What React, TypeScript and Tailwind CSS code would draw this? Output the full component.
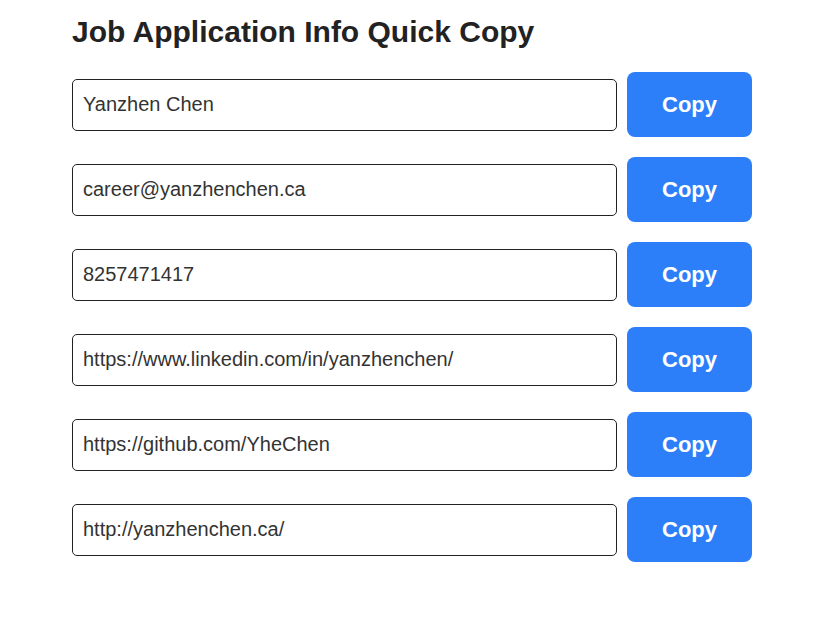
const FIELDS = [
  'Yanzhen Chen',
  'career@yanzhenchen.ca',
  '8257471417',
  'https://www.linkedin.com/in/yanzhenchen/',
  'https://github.com/YheChen',
  'http://yanzhenchen.ca/',
];

export default function App() {
  return (
    <div className="min-h-screen bg-white pl-[72px] pt-[15px] font-['Liberation_Sans',Arial,sans-serif]">
      <h1 className="text-[30px] leading-[34px] font-bold text-[#222] mb-[23px]">
        Job Application Info Quick Copy
      </h1>
      <div className="flex flex-col gap-[20px]">
        {FIELDS.map(value => (
          <div key={value} className="flex items-center gap-[10px]">
            <input
              readOnly
              value={value}
              className="w-[545px] h-[52px] px-[10px] border border-[#222] rounded-[5px] text-[20px] text-[#333] outline-none bg-white"
            />
            <button
              type="button"
              onClick={() => navigator.clipboard?.writeText(value)}
              className="w-[125px] h-[65px] rounded-[8px] bg-[#2d7ff9] text-white text-[22px] font-bold"
            >
              Copy
            </button>
          </div>
        ))}
      </div>
    </div>
  );
}
